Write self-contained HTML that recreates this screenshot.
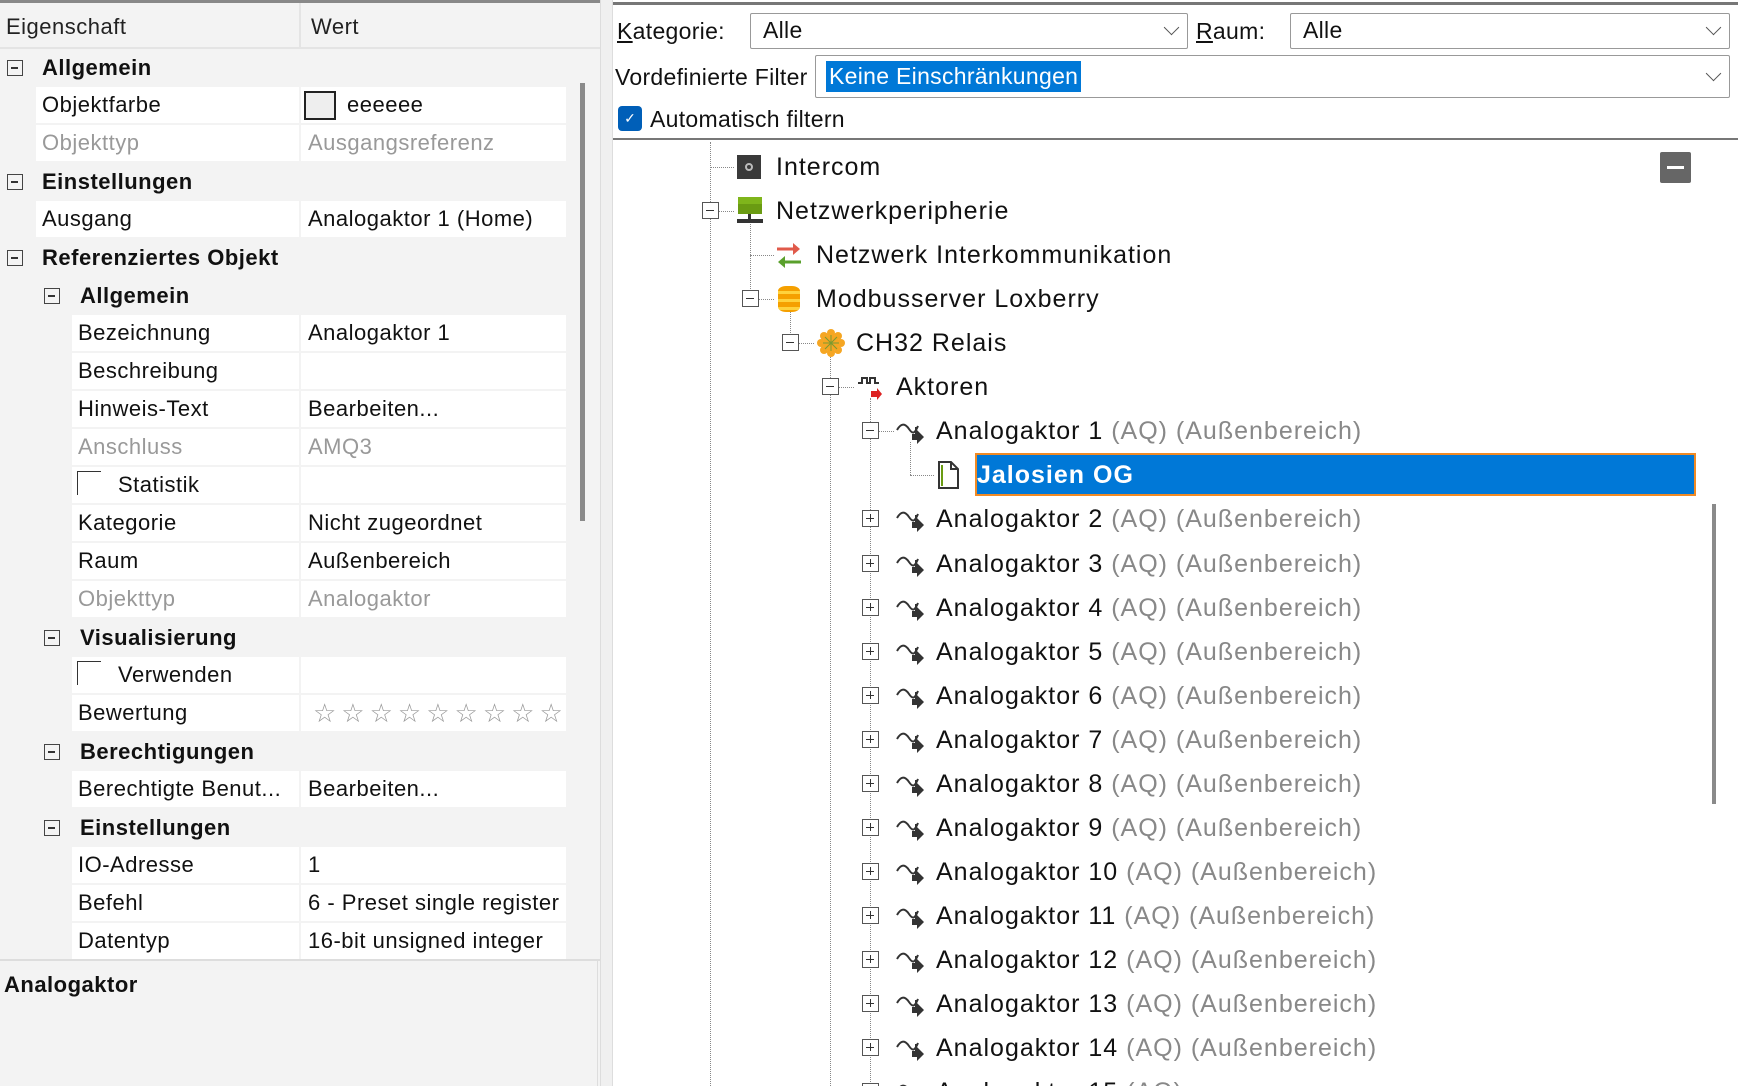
<!DOCTYPE html>
<html><head><meta charset="utf-8"><style>
*{margin:0;padding:0;box-sizing:border-box}
html{width:1738px;height:1086px;overflow:hidden}
body{width:1738px;height:1086px;overflow:hidden;background:#fff;font-family:"Segoe UI","Liberation Sans",sans-serif;color:#111;position:relative}
.a{position:absolute;white-space:nowrap}
#L{position:absolute;left:0;top:0;width:600px;height:1086px;background:#f3f3f3;letter-spacing:0.5px}
.hd{font-size:22px;line-height:48px;color:#222}
.cat{position:absolute;left:0;width:566px;height:38px;background:#f3f3f3;font-size:22px;font-weight:bold;line-height:38px}
.pn,.pv{position:absolute;height:36px;background:#fff;font-size:22px;line-height:36px;padding-left:6px;white-space:nowrap;overflow:hidden}
.pv{left:301px;width:265px;padding-left:7px}
.gr{color:#999}
.ex{position:absolute;width:16px;height:16px;border:1.5px solid #444;background:transparent}
.ex::before{content:"";position:absolute;left:3px;top:6px;width:7px;height:1.5px;background:#333}
.cb{position:absolute;width:24px;height:24px;border:1.5px solid #333;border-right:none;border-bottom:none}
#R{position:absolute;left:613px;top:0;width:1125px;height:1086px;background:#fff;overflow:hidden}
.lb{font-size:23px;color:#111;letter-spacing:0.3px}
.cmb{position:absolute;height:36px;border:1.5px solid #999;background:#fff;border-radius:2px}
.chev{position:absolute;right:10px;top:8px;width:11px;height:11px;border-right:1.5px solid #555;border-bottom:1.5px solid #555;transform:rotate(45deg)}
.tr{position:absolute;left:0;height:40px;font-size:25px;line-height:40px;white-space:nowrap;letter-spacing:1px}
.g{color:#888}
.te{position:absolute;width:17px;height:17px;border:1.5px solid #555;background:#fff}
.te::before{content:"";position:absolute;left:3px;top:6.5px;width:8px;height:1.5px;background:#333}
.te.p::after{content:"";position:absolute;left:6.5px;top:3px;width:1.5px;height:8px;background:#333}
.vl{position:absolute;border-left:1.5px dotted #888;width:0}
.hl{position:absolute;border-top:1.5px dotted #888;height:0}
</style></head><body>
<div id="L">
 <div class="a" style="left:0;top:0;width:600px;height:3px;background:#888"></div>
 <div class="a hd" style="left:6px;top:3px">Eigenschaft</div>
 <div class="a" style="left:299px;top:3px;width:2px;height:45px;background:#e4e4e4"></div>
 <div class="a hd" style="left:311px;top:3px">Wert</div>
 <div class="a" style="left:0;top:47px;width:600px;height:2px;background:#e4e4e4"></div>

 <div class="cat" style="top:49px"><div class="ex" style="left:7px;top:11px"></div><span class="a" style="left:42px">Allgemein</span></div>
 <div class="pn" style="top:87px;left:36px;width:263px">Objektfarbe</div><div class="pv" style="top:87px"><span class="a" style="left:3px;top:4px;width:32px;height:29px;border:2px solid #222;background:#eee"></span><span style="margin-left:39px">eeeeee</span></div>
 <div class="pn gr" style="top:125px;left:36px;width:263px">Objekttyp</div><div class="pv gr" style="top:125px">Ausgangsreferenz</div>
 <div class="cat" style="top:163px"><div class="ex" style="left:7px;top:11px"></div><span class="a" style="left:42px">Einstellungen</span></div>
 <div class="pn" style="top:201px;left:36px;width:263px">Ausgang</div><div class="pv" style="top:201px">Analogaktor 1 (Home)</div>
 <div class="cat" style="top:239px"><div class="ex" style="left:7px;top:11px"></div><span class="a" style="left:42px">Referenziertes Objekt</span></div>
 <div class="cat" style="top:277px"><div class="ex" style="left:44px;top:11px"></div><span class="a" style="left:80px">Allgemein</span></div>
 <div class="pn" style="top:315px;left:72px;width:227px">Bezeichnung</div><div class="pv" style="top:315px">Analogaktor 1</div>
 <div class="pn" style="top:353px;left:72px;width:227px">Beschreibung</div><div class="pv" style="top:353px"></div>
 <div class="pn" style="top:391px;left:72px;width:227px">Hinweis-Text</div><div class="pv" style="top:391px">Bearbeiten...</div>
 <div class="pn gr" style="top:429px;left:72px;width:227px">Anschluss</div><div class="pv gr" style="top:429px">AMQ3</div>
 <div class="pn" style="top:467px;left:72px;width:227px"><span class="cb" style="left:5px;top:4px"></span><span style="margin-left:40px">Statistik</span></div><div class="pv" style="top:467px"></div>
 <div class="pn" style="top:505px;left:72px;width:227px">Kategorie</div><div class="pv" style="top:505px">Nicht zugeordnet</div>
 <div class="pn" style="top:543px;left:72px;width:227px">Raum</div><div class="pv" style="top:543px">Außenbereich</div>
 <div class="pn gr" style="top:581px;left:72px;width:227px">Objekttyp</div><div class="pv gr" style="top:581px">Analogaktor</div>
 <div class="cat" style="top:619px"><div class="ex" style="left:44px;top:11px"></div><span class="a" style="left:80px">Visualisierung</span></div>
 <div class="pn" style="top:657px;left:72px;width:227px"><span class="cb" style="left:5px;top:4px"></span><span style="margin-left:40px">Verwenden</span></div><div class="pv" style="top:657px"></div>
 <div class="pn" style="top:695px;left:72px;width:227px">Bewertung</div><div class="pv" style="top:695px;color:#999;font-size:26px;letter-spacing:5px;padding-left:12px">☆☆☆☆☆☆☆☆☆</div>
 <div class="cat" style="top:733px"><div class="ex" style="left:44px;top:11px"></div><span class="a" style="left:80px">Berechtigungen</span></div>
 <div class="pn" style="top:771px;left:72px;width:227px">Berechtigte Benut...</div><div class="pv" style="top:771px">Bearbeiten...</div>
 <div class="cat" style="top:809px"><div class="ex" style="left:44px;top:11px"></div><span class="a" style="left:80px">Einstellungen</span></div>
 <div class="pn" style="top:847px;left:72px;width:227px">IO-Adresse</div><div class="pv" style="top:847px">1</div>
 <div class="pn" style="top:885px;left:72px;width:227px">Befehl</div><div class="pv" style="top:885px">6 - Preset single register</div>
 <div class="pn" style="top:923px;left:72px;width:227px">Datentyp</div><div class="pv" style="top:923px">16-bit unsigned integer</div>

 <div class="a" style="left:580px;top:83px;width:5px;height:438px;background:#8a8a8a"></div>
 <div class="a" style="left:0;top:959px;width:600px;height:2px;background:#ddd"></div>
 <div class="a" style="left:0;top:961px;width:598px;height:125px;background:#f3f3f3;border-right:1px solid #ddd"></div>
 <div class="a" style="left:4px;top:970px;font-size:22px;font-weight:bold;line-height:30px">Analogaktor</div>
</div>
<div class="a" style="left:600px;top:0;width:13px;height:1086px;background:#f0f0f0;border-left:1px solid #ddd;border-right:1px solid #ddd"></div>

<div id="R">
 <div class="a" style="left:0;top:2px;width:1125px;height:3px;background:#777"></div>
 <div class="a lb" style="left:4px;top:14px;line-height:34px"><u>K</u>ategorie:</div>
 <div class="cmb" style="left:137px;top:13px;width:438px"><span class="a lb" style="left:12px;top:0;line-height:33px">Alle</span><div class="chev"></div></div>
 <div class="a lb" style="left:583px;top:14px;line-height:34px"><u>R</u>aum:</div>
 <div class="cmb" style="left:677px;top:13px;width:440px"><span class="a lb" style="left:12px;top:0;line-height:33px">Alle</span><div class="chev"></div></div>
 <div class="a lb" style="left:2px;top:59px;line-height:36px">Vordefinierte Filter</div>
 <div class="cmb" style="left:202px;top:55px;width:915px;height:43px"><span class="a lb" style="left:10px;top:5px;line-height:31px;background:#0078d7;color:#fff;padding:0 3px">Keine Einschränkungen</span><div class="chev" style="top:12px"></div></div>
 <div class="a" style="left:5px;top:106px;width:24px;height:25px;background:#005fb8;border-radius:4px;color:#fff;font-size:14px;text-align:center;line-height:25px">✓</div>
 <div class="a lb" style="left:37px;top:101px;line-height:36px">Automatisch filtern</div>
 <div class="a" style="left:0;top:138px;width:1125px;height:2px;background:#777"></div>

 <div class="vl" style="left:97px;top:142px;height:944px"></div>
 <div class="hl" style="left:97px;top:167px;width:24px"></div>
 <div class="hl" style="left:106px;top:211px;width:15px"></div>
 <div class="vl" style="left:137px;top:222px;height:77px"></div>
 <div class="hl" style="left:137px;top:255px;width:24px"></div>
 <div class="hl" style="left:146px;top:299px;width:15px"></div>
 <div class="vl" style="left:177px;top:310px;height:33px"></div>
 <div class="hl" style="left:186px;top:343px;width:15px"></div>
 <div class="vl" style="left:217px;top:354px;height:732px"></div>
 <div class="hl" style="left:226px;top:387px;width:15px"></div>
 <div class="vl" style="left:257px;top:398px;height:688px"></div>
 <div class="hl" style="left:266px;top:431px;width:15px"></div>
 <div class="vl" style="left:297px;top:442px;height:33px"></div>
 <div class="hl" style="left:297px;top:475px;width:24px"></div>

 <div class="tr" style="top:147px"><span class="a" style="left:124px;top:8px;width:24px;height:24px;background:#3a3a3a"><span class="a" style="left:8px;top:8px;width:8px;height:8px;border:2px solid #bbb;border-radius:50%"></span></span><span class="a" style="left:163px">Intercom</span></div>
 <div class="tr" style="top:191px"><span class="te" style="left:89px;top:11px"></span><span class="a" style="left:124px;top:6px;width:26px;height:28px"><span class="a" style="left:1px;top:0;width:24px;height:17px;background:#6a9b12;border-top:7px solid #7fb51b"></span><span class="a" style="left:11px;top:17px;width:3px;height:6px;background:#333"></span><span class="a" style="left:0;top:22px;width:26px;height:4px;background:#333"></span></span><span class="a" style="left:163px">Netzwerkperipherie</span></div>
 <div class="tr" style="top:235px"><svg class="a" style="left:162px;top:6px" width="28" height="28"><path d="M2 8h18" stroke="#e05a4a" stroke-width="3"/><path d="M18 2l7 6-7 6z" fill="#e05a4a"/><path d="M8 21h18" stroke="#5aa02c" stroke-width="3"/><path d="M10 15l-7 6 7 6z" fill="#5aa02c"/></svg><span class="a" style="left:203px">Netzwerk Interkommunikation</span></div>
 <div class="tr" style="top:279px"><span class="te" style="left:129px;top:11px"></span><span class="a" style="left:165px;top:7px;width:22px;height:26px;border-radius:8px/5px;background:repeating-linear-gradient(#f5a000 0 5px,#ffd23c 5px 8px)"></span><span class="a" style="left:203px">Modbusserver Loxberry</span></div>
 <div class="tr" style="top:323px"><span class="te" style="left:169px;top:11px"></span><svg class="a" style="left:204px;top:6px" width="28" height="28"><g fill="#f5a623"><circle cx="14" cy="14" r="8"/><circle cx="14" cy="4" r="4"/><circle cx="14" cy="24" r="4"/><circle cx="4" cy="14" r="4"/><circle cx="24" cy="14" r="4"/><circle cx="7" cy="7" r="4"/><circle cx="21" cy="21" r="4"/><circle cx="21" cy="7" r="4"/><circle cx="7" cy="21" r="4"/></g><path d="M8 8l12 12M20 8L8 20M14 6v16M6 14h16" stroke="#7a9a30" stroke-width="1"/></svg><span class="a" style="left:243px">CH32 Relais</span></div>
 <div class="tr" style="top:367px"><span class="te" style="left:209px;top:11px"></span><svg class="a" style="left:244px;top:8px" width="26" height="26"><path d="M1 8h4V3h5v5h3V3h5v5h4" fill="none" stroke="#333" stroke-width="2"/><path d="M14 16h6v-3l5 6-5 6v-3h-6z" fill="#d22"/></svg><span class="a" style="left:283px">Aktoren</span></div>

 <div class="tr" style="top:411px"><span class="te" style="left:249px;top:11px"></span><svg class="a" style="left:283px;top:8px" width="30" height="28"><path d="M1 11c4-7 8-7 12-1s6 4 9-3" fill="none" stroke="#333" stroke-width="2"/><path d="M20 8v10" stroke="#333" stroke-width="2"/><path d="M16 15h5v-4l7 7-7 7v-4h-5z" fill="#333"/></svg><span class="a" style="left:323px">Analogaktor 1 <span class="g">(AQ) (Außenbereich)</span></span></div>
 <div class="a" style="left:362px;top:453px;width:721px;height:43px;background:#0078d7;border:2px solid #f08a24"></div>
 <div class="tr" style="top:455px"><svg class="a" style="left:323px;top:6px" width="24" height="28"><path d="M3 1h12l7 7v19H3z" fill="#fff" stroke="#333" stroke-width="2"/><path d="M15 1v7h7" fill="none" stroke="#333" stroke-width="2"/><path d="M6 4v21" stroke="#6a9b12" stroke-width="2"/></svg><span class="a" style="left:364px;color:#fff;font-weight:bold">Jalosien OG</span></div>

 <div class="tr" style="top:499px"><span class="te p" style="left:249px;top:11px"></span><svg class="a" style="left:283px;top:8px" width="30" height="28"><path d="M1 11c4-7 8-7 12-1s6 4 9-3" fill="none" stroke="#333" stroke-width="2"/><path d="M20 8v10" stroke="#333" stroke-width="2"/><path d="M16 15h5v-4l7 7-7 7v-4h-5z" fill="#333"/></svg><span class="a" style="left:323px">Analogaktor 2 <span class="g">(AQ) (Außenbereich)</span></span></div>
 <div class="tr" style="top:544px"><span class="te p" style="left:249px;top:11px"></span><svg class="a" style="left:283px;top:8px" width="30" height="28"><path d="M1 11c4-7 8-7 12-1s6 4 9-3" fill="none" stroke="#333" stroke-width="2"/><path d="M20 8v10" stroke="#333" stroke-width="2"/><path d="M16 15h5v-4l7 7-7 7v-4h-5z" fill="#333"/></svg><span class="a" style="left:323px">Analogaktor 3 <span class="g">(AQ) (Außenbereich)</span></span></div>
 <div class="tr" style="top:588px"><span class="te p" style="left:249px;top:11px"></span><svg class="a" style="left:283px;top:8px" width="30" height="28"><path d="M1 11c4-7 8-7 12-1s6 4 9-3" fill="none" stroke="#333" stroke-width="2"/><path d="M20 8v10" stroke="#333" stroke-width="2"/><path d="M16 15h5v-4l7 7-7 7v-4h-5z" fill="#333"/></svg><span class="a" style="left:323px">Analogaktor 4 <span class="g">(AQ) (Außenbereich)</span></span></div>
 <div class="tr" style="top:632px"><span class="te p" style="left:249px;top:11px"></span><svg class="a" style="left:283px;top:8px" width="30" height="28"><path d="M1 11c4-7 8-7 12-1s6 4 9-3" fill="none" stroke="#333" stroke-width="2"/><path d="M20 8v10" stroke="#333" stroke-width="2"/><path d="M16 15h5v-4l7 7-7 7v-4h-5z" fill="#333"/></svg><span class="a" style="left:323px">Analogaktor 5 <span class="g">(AQ) (Außenbereich)</span></span></div>
 <div class="tr" style="top:676px"><span class="te p" style="left:249px;top:11px"></span><svg class="a" style="left:283px;top:8px" width="30" height="28"><path d="M1 11c4-7 8-7 12-1s6 4 9-3" fill="none" stroke="#333" stroke-width="2"/><path d="M20 8v10" stroke="#333" stroke-width="2"/><path d="M16 15h5v-4l7 7-7 7v-4h-5z" fill="#333"/></svg><span class="a" style="left:323px">Analogaktor 6 <span class="g">(AQ) (Außenbereich)</span></span></div>
 <div class="tr" style="top:720px"><span class="te p" style="left:249px;top:11px"></span><svg class="a" style="left:283px;top:8px" width="30" height="28"><path d="M1 11c4-7 8-7 12-1s6 4 9-3" fill="none" stroke="#333" stroke-width="2"/><path d="M20 8v10" stroke="#333" stroke-width="2"/><path d="M16 15h5v-4l7 7-7 7v-4h-5z" fill="#333"/></svg><span class="a" style="left:323px">Analogaktor 7 <span class="g">(AQ) (Außenbereich)</span></span></div>
 <div class="tr" style="top:764px"><span class="te p" style="left:249px;top:11px"></span><svg class="a" style="left:283px;top:8px" width="30" height="28"><path d="M1 11c4-7 8-7 12-1s6 4 9-3" fill="none" stroke="#333" stroke-width="2"/><path d="M20 8v10" stroke="#333" stroke-width="2"/><path d="M16 15h5v-4l7 7-7 7v-4h-5z" fill="#333"/></svg><span class="a" style="left:323px">Analogaktor 8 <span class="g">(AQ) (Außenbereich)</span></span></div>
 <div class="tr" style="top:808px"><span class="te p" style="left:249px;top:11px"></span><svg class="a" style="left:283px;top:8px" width="30" height="28"><path d="M1 11c4-7 8-7 12-1s6 4 9-3" fill="none" stroke="#333" stroke-width="2"/><path d="M20 8v10" stroke="#333" stroke-width="2"/><path d="M16 15h5v-4l7 7-7 7v-4h-5z" fill="#333"/></svg><span class="a" style="left:323px">Analogaktor 9 <span class="g">(AQ) (Außenbereich)</span></span></div>
 <div class="tr" style="top:852px"><span class="te p" style="left:249px;top:11px"></span><svg class="a" style="left:283px;top:8px" width="30" height="28"><path d="M1 11c4-7 8-7 12-1s6 4 9-3" fill="none" stroke="#333" stroke-width="2"/><path d="M20 8v10" stroke="#333" stroke-width="2"/><path d="M16 15h5v-4l7 7-7 7v-4h-5z" fill="#333"/></svg><span class="a" style="left:323px">Analogaktor 10 <span class="g">(AQ) (Außenbereich)</span></span></div>
 <div class="tr" style="top:896px"><span class="te p" style="left:249px;top:11px"></span><svg class="a" style="left:283px;top:8px" width="30" height="28"><path d="M1 11c4-7 8-7 12-1s6 4 9-3" fill="none" stroke="#333" stroke-width="2"/><path d="M20 8v10" stroke="#333" stroke-width="2"/><path d="M16 15h5v-4l7 7-7 7v-4h-5z" fill="#333"/></svg><span class="a" style="left:323px">Analogaktor 11 <span class="g">(AQ) (Außenbereich)</span></span></div>
 <div class="tr" style="top:940px"><span class="te p" style="left:249px;top:11px"></span><svg class="a" style="left:283px;top:8px" width="30" height="28"><path d="M1 11c4-7 8-7 12-1s6 4 9-3" fill="none" stroke="#333" stroke-width="2"/><path d="M20 8v10" stroke="#333" stroke-width="2"/><path d="M16 15h5v-4l7 7-7 7v-4h-5z" fill="#333"/></svg><span class="a" style="left:323px">Analogaktor 12 <span class="g">(AQ) (Außenbereich)</span></span></div>
 <div class="tr" style="top:984px"><span class="te p" style="left:249px;top:11px"></span><svg class="a" style="left:283px;top:8px" width="30" height="28"><path d="M1 11c4-7 8-7 12-1s6 4 9-3" fill="none" stroke="#333" stroke-width="2"/><path d="M20 8v10" stroke="#333" stroke-width="2"/><path d="M16 15h5v-4l7 7-7 7v-4h-5z" fill="#333"/></svg><span class="a" style="left:323px">Analogaktor 13 <span class="g">(AQ) (Außenbereich)</span></span></div>
 <div class="tr" style="top:1028px"><span class="te p" style="left:249px;top:11px"></span><svg class="a" style="left:283px;top:8px" width="30" height="28"><path d="M1 11c4-7 8-7 12-1s6 4 9-3" fill="none" stroke="#333" stroke-width="2"/><path d="M20 8v10" stroke="#333" stroke-width="2"/><path d="M16 15h5v-4l7 7-7 7v-4h-5z" fill="#333"/></svg><span class="a" style="left:323px">Analogaktor 14 <span class="g">(AQ) (Außenbereich)</span></span></div>
 <div class="tr" style="top:1072px"><span class="te p" style="left:249px;top:11px"></span><svg class="a" style="left:283px;top:8px" width="30" height="28"><path d="M1 11c4-7 8-7 12-1s6 4 9-3" fill="none" stroke="#333" stroke-width="2"/></svg><span class="a" style="left:323px">Analogaktor 15 <span class="g">(AQ)</span></span></div>

 <div class="a" style="left:1047px;top:152px;width:31px;height:31px;background:#666;border-radius:2px"><span class="a" style="left:7px;top:14px;width:17px;height:3px;background:#fff"></span></div>
 <div class="a" style="left:1099px;top:504px;width:4px;height:300px;background:#8a8a8a"></div>
</div>
</body></html>
